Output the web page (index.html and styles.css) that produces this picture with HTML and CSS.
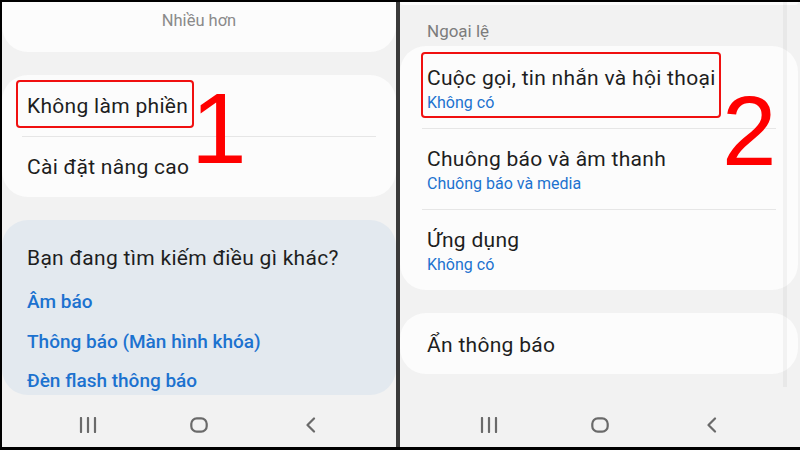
FILE: index.html
```html
<!DOCTYPE html>
<html lang="vi">

<head>
    <meta charset="utf-8">
    <title>Không làm phiền</title>
    <link rel="stylesheet" href="styles.css">
</head>

<body>
    <div class="frame">
        <!-- Screen 1: notification settings -->
        <section class="panel">
            <div class="content">
                <div class="card card-top">
                    <span class="more">Nhiều hơn</span>
                </div>
                <div class="card group">
                    <div class="row"><span class="mark mark-left">Không làm phiền</span></div>
                    <div class="sep"></div>
                    <div class="row">Cài đặt nâng cao</div>
                    <span class="step step-1">1</span>
                </div>
                <div class="card related">
                    <div class="related-title">Bạn đang tìm kiếm điều gì khác?</div>
                    <a class="link">Âm báo</a>
                    <a class="link">Thông báo (Màn hình khóa)</a>
                    <a class="link">Đèn flash thông báo</a>
                </div>
            </div>
            <nav class="navbar">
                <svg class="nav-icon" width="18" height="16" viewBox="0 0 18 16">
                    <path d="M2 1v14M9 1v14M16 1v14" />
                </svg>
                <svg class="nav-icon" width="18" height="16" viewBox="0 0 18 16">
                    <rect x="1.3" y="1.3" width="15.4" height="13.4" rx="5.5" />
                </svg>
                <svg class="nav-icon" width="18" height="16" viewBox="0 0 18 16">
                    <path d="M13 1.5 6.5 8l6.5 6.5" />
                </svg>
            </nav>
        </section>

        <div class="divider"></div>

        <!-- Screen 2: do not disturb exceptions -->
        <section class="panel">
            <div class="content">
                <div class="card card-stub"></div>
                <div class="section-label">Ngoại lệ</div>
                <div class="card group group-right">
                    <div class="row row-2line">
                        <div class="mark mark-right">
                            <div class="title">Cuộc gọi, tin nhắn và hội thoại</div>
                            <div class="sub">Không có</div>
                        </div>
                    </div>
                    <div class="sep sep-right"></div>
                    <div class="row row-2line">
                        <div>
                            <div class="title">Chuông báo và âm thanh</div>
                            <div class="sub">Chuông báo và media</div>
                        </div>
                    </div>
                    <div class="sep sep-right"></div>
                    <div class="row row-2line">
                        <div>
                            <div class="title">Ứng dụng</div>
                            <div class="sub">Không có</div>
                        </div>
                    </div>
                    <span class="step step-2">2</span>
                </div>
                <div class="card single">Ẩn thông báo</div>
            </div>
            <div class="scrollbar"></div>
            <nav class="navbar">
                <svg class="nav-icon" width="18" height="16" viewBox="0 0 18 16">
                    <path d="M2 1v14M9 1v14M16 1v14" />
                </svg>
                <svg class="nav-icon" width="18" height="16" viewBox="0 0 18 16">
                    <rect x="1.3" y="1.3" width="15.4" height="13.4" rx="5.5" />
                </svg>
                <svg class="nav-icon" width="18" height="16" viewBox="0 0 18 16">
                    <path d="M13 1.5 6.5 8l6.5 6.5" />
                </svg>
            </nav>
        </section>
    </div>
</body>

</html>
```

FILE: styles.css
```css
body {
    margin: 0;
    background-color: #000000;
    font-family: Roboto, "Noto Sans", sans-serif;
    color: #1e1e1e;
}

.frame {
    display: flex;
    width: 800px;
    height: 450px;
    box-sizing: border-box;
    padding: 2px 0 3px 2px;
    background-color: #000000;
}

.panel {
    position: relative;
    display: flex;
    flex-direction: column;
    background-color: #f2f2f2;
    overflow: hidden;
}

.panel:first-child {
    width: 394px;
}

.panel:last-child {
    width: 400px;
}

.divider {
    width: 4px;
    background-color: #3a3a3a;
}

.content {
    flex: 1;
    overflow: hidden;
}

.card {
    position: relative;
    background-color: #fcfcfc;
    border-radius: 26px;
}

/* left screen */

.card-top {
    height: 50px;
    box-sizing: border-box;
    padding-top: 8px;
    border-radius: 0 0 26px 26px;
    text-align: center;
}

.more {
    font-size: 16.5px;
    line-height: 22px;
    color: #8a8a8a;
}

.group {
    margin-top: 23px;
    padding-top: 1px;
}

.row {
    display: flex;
    align-items: center;
    height: 60px;
    padding: 0 25px;
    font-size: 21px;
    letter-spacing: 0.3px;
    line-height: 24px;
}

.sep {
    height: 1px;
    margin: 0 20px;
    background-color: #e6e6e6;
}

.mark {
    display: inline-block;
    border: 2px solid #f01010;
    border-radius: 4px;
}

.mark-left {
    padding: 12px 4px 8px 9px;
    margin: -14px -6px -10px -11px;
}

.step {
    position: absolute;
    font-family: "Liberation Sans", Arial, sans-serif;
    line-height: 1;
    letter-spacing: 0;
    color: #ff0000;
}

.step-1 {
    left: 189px;
    top: 3px;
    font-size: 100px;
}

.related {
    height: 175px;
    box-sizing: border-box;
    margin-top: 23px;
    padding: 26px 25px 0;
    background-color: #e3e9ef;
}

.related-title {
    font-size: 21px;
    letter-spacing: 0.3px;
    line-height: 24px;
}

.link {
    display: block;
    margin-top: 16px;
    font-size: 19px;
    font-weight: 500;
    line-height: 24px;
    color: #1c72cf;
}

.related-title + .link {
    margin-top: 20px;
}

.link:last-child {
    margin-top: 15px;
}

/* right screen */

.card-stub {
    height: 3px;
    border-radius: 0 0 26px 26px;
    margin-right: 2px;
}

.section-label {
    margin: 16px 0 5px 27px;
    font-size: 17px;
    line-height: 20px;
    color: #7c7c7c;
}

.group-right {
    margin-top: 0;
    margin-right: 2px;
    padding-top: 2px;
}

.row-2line {
    height: 80px;
    box-sizing: border-box;
    align-items: flex-start;
    padding: 17px 27px 0;
}

.title {
    font-size: 21px;
    line-height: 26px;
}

.sub {
    margin-top: 2px;
    font-size: 16px;
    letter-spacing: 0;
    line-height: 20px;
    color: #1c72cf;
}

.mark-right {
    padding: 11px 3px 3px 4px;
    margin: -13px -5px 0 -6px;
}

.sep-right {
    margin: 0 22px 0 22px;
}

.step-2 {
    left: 322px;
    top: 36px;
    font-size: 98px;
}

.single {
    display: flex;
    align-items: center;
    height: 61px;
    box-sizing: border-box;
    margin: 23px 2px 0 0;
    padding: 2px 27px 0;
    font-size: 21px;
    letter-spacing: 0.3px;
}

.scrollbar {
    position: absolute;
    left: 383px;
    top: 0;
    width: 4px;
    height: 385px;
    background-color: rgba(0, 0, 0, 0.04);
}

/* navigation bar */

.navbar {
    display: flex;
    justify-content: center;
    align-items: center;
    gap: 93px;
    height: 50px;
    box-sizing: border-box;
    padding-top: 5px;
}

.nav-icon {
    fill: none;
    stroke: #6a6a6a;
    stroke-width: 2.2;
    stroke-linecap: round;
    stroke-linejoin: round;
}
```
